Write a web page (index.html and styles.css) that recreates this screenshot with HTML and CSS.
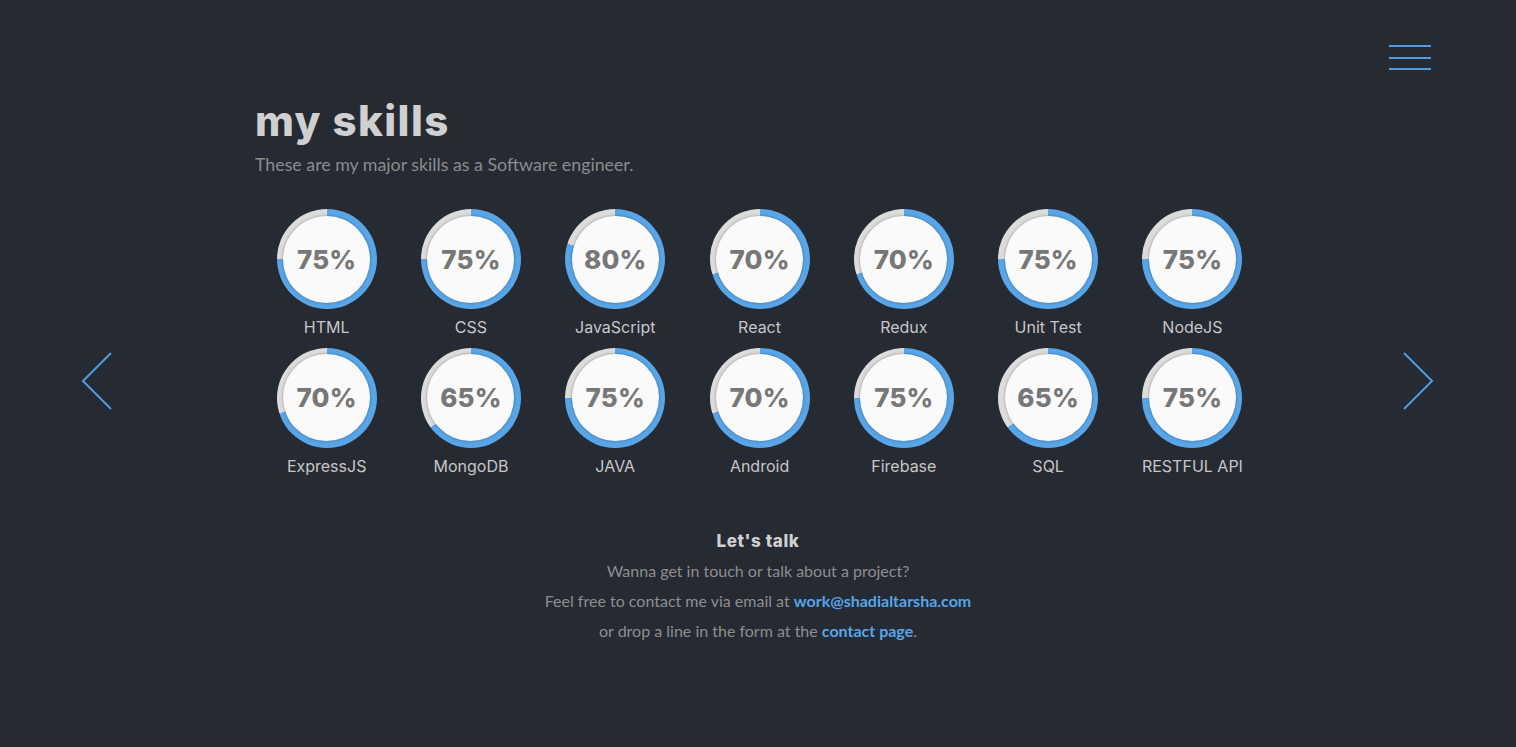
FILE: index.html
```html
<!DOCTYPE html>
<html lang="en">
<head>
<meta charset="utf-8">
<title>my skills</title>
<link rel="stylesheet" href="styles.css">
</head>
<body>
<div class="page">
  <button class="menu" aria-label="menu"><span></span><span></span><span></span></button>
  <button class="arrow arrow-left" aria-label="previous">
    <svg width="34" height="60" viewBox="0 0 34 60"><path d="M30 2 L2 30 L30 58" fill="none" stroke="#4f9de0" stroke-width="2"/></svg>
  </button>
  <button class="arrow arrow-right" aria-label="next">
    <svg width="34" height="60" viewBox="0 0 34 60"><path d="M4 2 L32 30 L4 58" fill="none" stroke="#4f9de0" stroke-width="2"/></svg>
  </button>

  <main class="content">
    <h1 class="title">my skills</h1>
    <p class="subtitle">These are my major skills as a Software engineer.</p>

    <div class="skills">
      <div class="skill"><div class="ring" style="--p:75%"><div class="inner">75%</div></div><div class="label">HTML</div></div>
      <div class="skill"><div class="ring" style="--p:75%"><div class="inner">75%</div></div><div class="label">CSS</div></div>
      <div class="skill"><div class="ring" style="--p:80%"><div class="inner">80%</div></div><div class="label">JavaScript</div></div>
      <div class="skill"><div class="ring" style="--p:70%"><div class="inner">70%</div></div><div class="label">React</div></div>
      <div class="skill"><div class="ring" style="--p:70%"><div class="inner">70%</div></div><div class="label">Redux</div></div>
      <div class="skill"><div class="ring" style="--p:75%"><div class="inner">75%</div></div><div class="label">Unit Test</div></div>
      <div class="skill"><div class="ring" style="--p:75%"><div class="inner">75%</div></div><div class="label">NodeJS</div></div>
      <div class="skill"><div class="ring" style="--p:70%"><div class="inner">70%</div></div><div class="label">ExpressJS</div></div>
      <div class="skill"><div class="ring" style="--p:65%"><div class="inner">65%</div></div><div class="label">MongoDB</div></div>
      <div class="skill"><div class="ring" style="--p:75%"><div class="inner">75%</div></div><div class="label">JAVA</div></div>
      <div class="skill"><div class="ring" style="--p:70%"><div class="inner">70%</div></div><div class="label">Android</div></div>
      <div class="skill"><div class="ring" style="--p:75%"><div class="inner">75%</div></div><div class="label">Firebase</div></div>
      <div class="skill"><div class="ring" style="--p:65%"><div class="inner">65%</div></div><div class="label">SQL</div></div>
      <div class="skill"><div class="ring" style="--p:75%"><div class="inner">75%</div></div><div class="label">RESTFUL API</div></div>
    </div>

    <section class="talk">
      <h2 class="talk-title">Let's talk</h2>
      <p>Wanna get in touch or talk about a project?</p>
      <p>Feel free to contact me via email at <a href="#">work@shadialtarsha.com</a></p>
      <p>or drop a line in the form at the <a href="#">contact page</a>.</p>
    </section>
  </main>
</div>
</body>
</html>
```

FILE: styles.css
```css
* { box-sizing: border-box; }
html, body { margin: 0; padding: 0; }
body {
  background: #262a33;
  font-family: "Lato", "Open Sans", sans-serif;
  color: #8e8e8e;
  width: 1516px;
  height: 747px;
  overflow: hidden;
}
.page {
  position: relative;
  width: 1516px;
  height: 747px;
}
.menu {
  position: absolute;
  left: 1389px;
  top: 45px;
  width: 42px;
  height: 25px;
  padding: 0;
  border: 0;
  background: none;
  display: flex;
  flex-direction: column;
  justify-content: space-between;
}
.menu span {
  display: block;
  width: 42px;
  height: 2px;
  background: #4f9de0;
}
.arrow {
  position: absolute;
  top: 351px;
  padding: 0;
  border: 0;
  background: none;
  line-height: 0;
}
.arrow-left { left: 81px; }
.arrow-right { left: 1400px; }

.content {
  width: 1010px;
  margin: 0 auto;
  padding-top: 96px;
}
.title {
  margin: 0 0 0 2px;
  font-family: "Inter", "Open Sans", sans-serif;
  font-weight: 800;
  font-size: 42px;
  line-height: 50px;
  letter-spacing: 1.4px;
  color: #d0d0d0;
}
.subtitle {
  margin: 6px 0 0 2px;
  font-size: 17.8px;
  line-height: 24px;
  color: #8c8c8c;
}
.skills {
  margin-top: 33px;
  margin-left: 1.5px;
  display: grid;
  grid-template-columns: repeat(7, 144.3px);
  row-gap: 9.5px;
}
.skill {
  display: flex;
  flex-direction: column;
  align-items: center;
}
.ring {
  width: 100px;
  height: 100px;
  border-radius: 50%;
  background: conic-gradient(#58a5e8 0 var(--p), #dcdcdc var(--p) 100%);
  display: flex;
  align-items: center;
  justify-content: center;
}
.inner {
  width: 87px;
  height: 87px;
  border-radius: 50%;
  background: #fafafa;
  box-shadow: 0 0 3px rgba(0,0,0,0.35);
  display: flex;
  align-items: center;
  justify-content: center;
  font-family: "Inter", "Open Sans", sans-serif;
  font-weight: 800;
  font-size: 26px;
  letter-spacing: 0.2px;
  color: #777777;
}
.label {
  margin-top: 7px;
  font-family: "Inter", "Open Sans", sans-serif;
  font-size: 16px;
  line-height: 22px;
  color: #c6c6c6;
}
.talk {
  margin-top: 52px;
  text-align: center;
}
.talk-title {
  margin: 0 0 3px;
  font-family: "Inter", "Open Sans", sans-serif;
  font-weight: 800;
  font-size: 17px;
  letter-spacing: 0.6px;
  line-height: 24px;
  color: #cfcfcf;
}
.talk p {
  margin: 0;
  font-size: 16px;
  line-height: 30px;
  color: #8e8e8e;
}
.talk a {
  color: #58a5e8;
  font-weight: 700;
  text-decoration: none;
}
```
